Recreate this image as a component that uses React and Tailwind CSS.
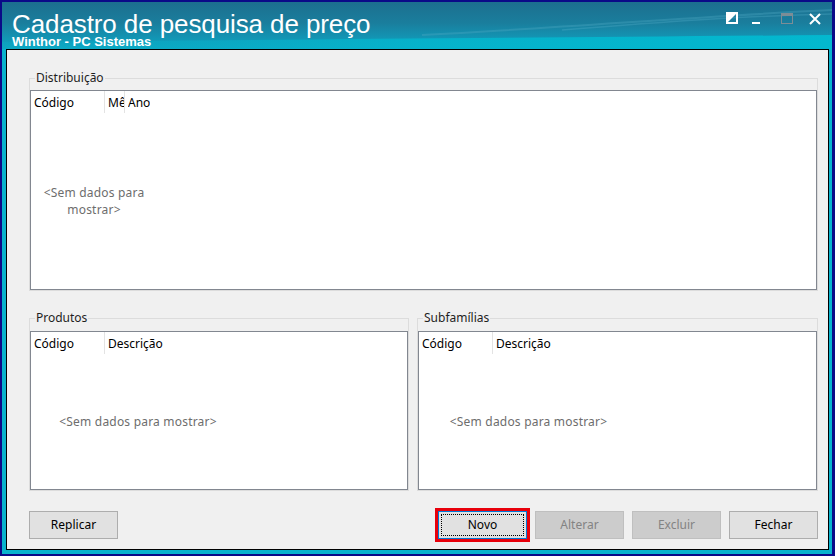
import React from "react";

const ui = { fontFamily: '"Noto Sans", "Open Sans", sans-serif' };
const titleFont = { fontFamily: '"Liberation Sans", Arial, sans-serif' };

function Column({ label, w, last }) {
  return (
    <div
      className={
        "h-full flex items-center pl-[3px] pt-[2px] overflow-hidden whitespace-nowrap text-[12px] text-black " +
        (last ? "flex-1" : "border-r border-[#e3e3e3]")
      }
      style={w ? { width: w } : undefined}
    >
      <span className="block overflow-hidden">{label}</span>
    </div>
  );
}

function Grid({ columns, emptyWidth, emptyText }) {
  return (
    <div className="flex-1 flex flex-col border border-[#828790] bg-white min-h-0">
      <div className="h-[22px] flex shrink-0">
        {columns.map((c, i) => (
          <Column key={c.label} label={c.label} w={c.w} last={i === columns.length - 1} />
        ))}
      </div>
      <div className="flex-1 flex">
        <div
          className="flex items-center justify-center text-center text-[12px] leading-[17px] tracking-[0.2px] text-[#6d6d6d]"
          style={{ width: emptyWidth }}
        >
          {emptyText}
        </div>
      </div>
    </div>
  );
}

function GroupBox({ label, className, pt, children }) {
  return (
    <div className={"relative flex flex-col border border-[#dcdcdc] " + className} style={{ paddingTop: pt }}>
      <span className="absolute -top-[9px] left-[5px] px-[1px] bg-[#f0f0f0] text-[12px] leading-[16px] text-[#1e1e1e]">
        {label}
      </span>
      {children}
    </div>
  );
}

function Button({ children, disabled, focused }) {
  if (focused) {
    return (
      <button className="relative w-[89px] h-[28px] bg-[#e1e1e1] border border-[#0078d7] text-[12px] text-black outline-[3px] outline-solid outline-[#e8000b] outline-offset-[0px]">
        <span className="absolute inset-[2px] border border-dotted border-black" />
        {children}
      </button>
    );
  }
  return (
    <button
      className={
        "w-[89px] h-[28px] border text-[12px] " +
        (disabled
          ? "bg-[#cccccc] border-[#bfbfbf] text-[#838383]"
          : "bg-[#e1e1e1] border-[#adadad] text-black")
      }
    >
      {children}
    </button>
  );
}

function WindowControls() {
  return (
    <div className="flex items-start pt-[10px] pr-[11px]">
      {/* contrast toggle */}
      <svg width="12" height="12" viewBox="0 0 12 12">
        <rect x="1" y="1" width="10" height="10" fill="none" stroke="#fff" strokeWidth="2" />
        <path d="M1 1 L11 1 L1 11 Z" fill="#fff" />
      </svg>
      {/* minimize */}
      <svg className="ml-[12px]" width="12" height="12" viewBox="0 0 12 12">
        <rect x="2" y="10" width="8" height="2" fill="#fff" />
      </svg>
      {/* maximize (disabled) */}
      <svg className="ml-[19px] mt-[1px]" width="12" height="12" viewBox="0 0 12 12">
        <rect x="0.5" y="0.5" width="11" height="10" fill="none" stroke="#7c8d96" />
        <rect x="0" y="0" width="12" height="3" fill="#7c8d96" />
      </svg>
      {/* close */}
      <svg className="ml-[16px] mt-[1px]" width="12" height="12" viewBox="0 0 12 12">
        <path d="M1 1 L11 11 M11 1 L1 11" stroke="#fff" strokeWidth="2" />
      </svg>
    </div>
  );
}

export default function App() {
  return (
    <div className="w-[835px] h-[556px] bg-[#0a0a88] pt-[2px] pl-[2px] pr-[3px] pb-[2px] flex" style={ui}>
      <div className="flex-1 flex flex-col bg-[#08b3cd]">
        {/* title bar */}
        <div className="relative h-[47px] shrink-0 flex justify-between overflow-hidden bg-[linear-gradient(180deg,#1c6f8f_0%,#1a7e9d_45%,#1394b3_75%,#0aa9c4_100%)]">
          <svg className="absolute inset-0" width="830" height="47" viewBox="0 0 830 47" preserveAspectRatio="none">
            <defs>
              <linearGradient id="band" x1="0" x2="1" y1="0" y2="0">
                <stop offset="0" stopColor="#0ea6c2" stopOpacity="0.4" />
                <stop offset="0.5" stopColor="#05b4cc" stopOpacity="0.9" />
                <stop offset="1" stopColor="#03b8cf" stopOpacity="1" />
              </linearGradient>
            </defs>
            <path d="M0 40 C250 38 500 36 830 33 L830 47 L0 47 Z" fill="url(#band)" />
            <path d="M420 33 C560 26 700 14 830 8" stroke="#4fa9c2" strokeOpacity="0.35" strokeWidth="2" fill="none" />
            <path d="M560 28 C660 20 740 14 830 12" stroke="#5ab4cc" strokeOpacity="0.3" strokeWidth="1.5" fill="none" />
          </svg>
          <div className="relative pl-[10px] pt-[10px] text-white" style={titleFont}>
            <div className="text-[26px] leading-[24px] tracking-[-0.1px]">Cadastro de pesquisa de preço</div>
            <div className="text-[13px] leading-[12px] font-bold">Winthor - PC Sistemas</div>
          </div>
          <div className="relative">
            <WindowControls />
          </div>
        </div>

        {/* client area */}
        <div className="flex-1 flex pl-[4px] pr-[3px] pb-[4px] min-h-0">
          <div className="flex-1 flex flex-col border border-black bg-[#f0f0f0] pt-[28px] pl-[22px] pr-[10px] pb-[10px]">
            <GroupBox label="Distribuição" className="h-[213px]" pt={11}>
              <Grid
                columns={[
                  { label: "Código", w: 74 },
                  { label: "Mês", w: 20 },
                  { label: "Ano" },
                ]}
                emptyWidth={126}
                emptyText={"<Sem dados para mostrar>"}
              />
            </GroupBox>

            <div className="mt-[27px] h-[173px] flex gap-[8px]">
              <GroupBox label="Produtos" className="w-[380px]" pt={12}>
                <Grid
                  columns={[{ label: "Código", w: 74 }, { label: "Descrição" }]}
                  emptyWidth={214}
                  emptyText={"<Sem dados para mostrar>"}
                />
              </GroupBox>
              <GroupBox label="Subfamílias" className="flex-1" pt={12}>
                <Grid
                  columns={[{ label: "Código", w: 74 }, { label: "Descrição" }]}
                  emptyWidth={219}
                  emptyText={"<Sem dados para mostrar>"}
                />
              </GroupBox>
            </div>

            <div className="mt-[20px] flex">
              <Button>Replicar</Button>
              <div className="flex-1" />
              <div className="flex gap-[8px]">
                <Button focused>Novo</Button>
                <Button disabled>Alterar</Button>
                <Button disabled>Excluir</Button>
                <Button>Fechar</Button>
              </div>
            </div>
          </div>
        </div>
      </div>
    </div>
  );
}
